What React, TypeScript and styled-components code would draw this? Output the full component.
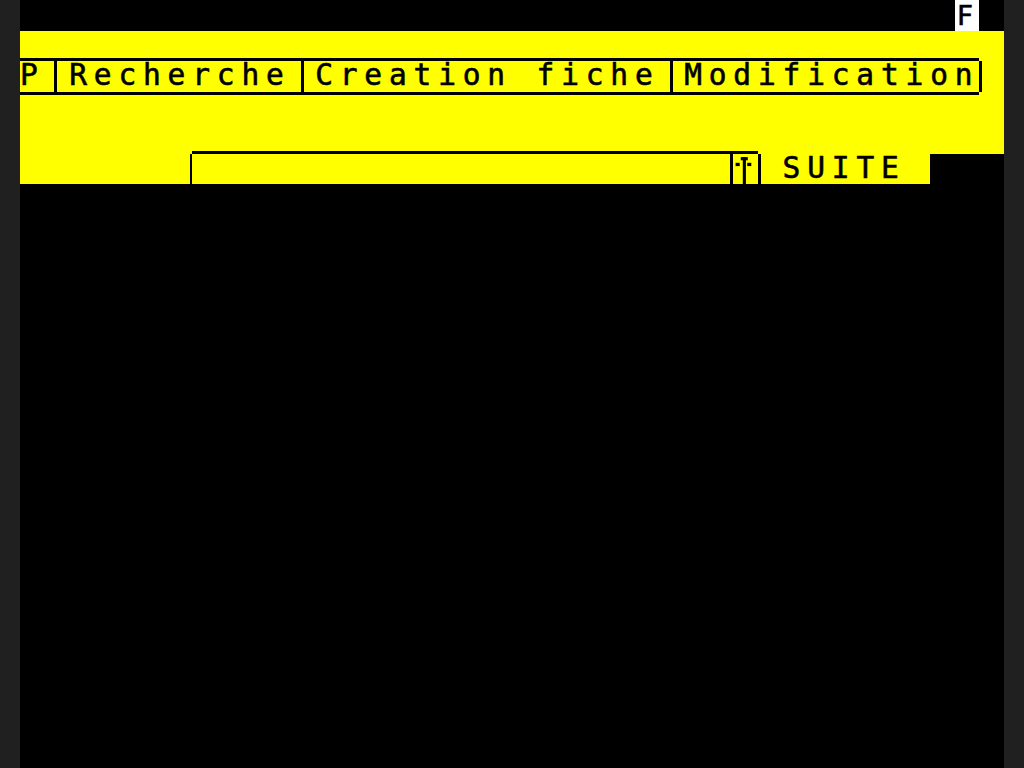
import React from "react";
import styled, { createGlobalStyle } from "styled-components";

const COL = 24.6;
const ROW = 30.72;
const PX = 3.07;
const FONT_SIZE = 29.5;
const SPACING = COL - 0.60205 * FONT_SIZE;

const GlobalStyle = createGlobalStyle`
  html, body {
    margin: 0;
    padding: 0;
    background: #202020;
  }
  body {
    font-family: "DejaVu Sans Mono", "Liberation Mono", monospace;
  }
`;

const Screen = styled.div`
  width: ${COL * 40}px;
  height: 768px;
  margin: 0 auto;
  background: #000;
  overflow: hidden;
  display: flex;
  flex-direction: column;
`;

const StatusRow = styled.div`
  height: ${ROW}px;
  display: flex;
  justify-content: flex-end;
  padding-right: ${COL}px;
  flex: none;
`;

const CellText = styled.span<{ $cols: number; $bg?: string }>`
  display: block;
  flex: none;
  width: ${(p) => p.$cols * COL}px;
  height: ${ROW}px;
  box-sizing: border-box;
  padding-bottom: 2px;
  font-family: "DejaVu Sans Mono", "Liberation Mono", monospace;
  font-size: ${FONT_SIZE}px;
  line-height: ${ROW - 2}px;
  letter-spacing: ${(p) => (p.$cols > 1 ? SPACING : 0)}px;
  white-space: pre;
  color: #000;
  -webkit-text-stroke: 0.6px #000;
  background: ${(p) => p.$bg ?? "transparent"};
`;

const StatusCell = styled(CellText)`
  padding: 0 0 0 2px;
  font-size: 27px;
  line-height: 31.4px;
  overflow: hidden;
`;

const YellowBand = styled.div`
  height: ${ROW * 4}px;
  background: #ffff00;
  flex: none;
  display: flex;
  flex-direction: column;
`;

const MenuRow = styled.div`
  margin-top: ${ROW - PX}px;
  display: flex;
  align-items: center;
`;

const MenuBar = styled.div`
  width: ${COL * 39}px;
  height: ${ROW}px;
  border-top: ${PX}px solid #000;
  border-bottom: ${PX}px solid #000;
  display: flex;
`;

const Divider = styled.span<{ $at: number }>`
  flex: none;
  width: ${COL}px;
  height: ${ROW}px;
  background: linear-gradient(
    to right,
    transparent ${(p) => p.$at}px,
    #000 ${(p) => p.$at}px,
    #000 ${(p) => p.$at + PX}px,
    transparent ${(p) => p.$at + PX}px
  );
`;

const InputRow = styled.div`
  width: ${COL * 37}px;
  height: ${ROW}px;
  background: #ffff00;
  flex: none;
  display: flex;
  align-items: flex-start;
  padding-left: ${COL * 6}px;
  box-sizing: border-box;
`;

const FieldBox = styled.div`
  width: ${COL * 23}px;
  height: ${ROW}px;
  margin-top: -${PX}px;
  border-top: ${PX}px solid #000;
  display: flex;
  flex: none;
`;

const FieldTrack = styled.div`
  width: ${COL * 22}px;
  height: ${ROW}px;
  flex: none;
  background: linear-gradient(
    to right,
    transparent ${COL * 22 - PX}px,
    #000 ${COL * 22 - PX}px
  );
`;

const ArrowCell = styled.span`
  width: ${COL}px;
  height: ${ROW}px;
  flex: none;
  display: block;
  svg {
    display: block;
  }
`;

const SuiteLabel = styled(CellText)`
  padding-left: ${COL}px;
  background: linear-gradient(
    to right,
    #000 ${PX}px,
    transparent ${PX}px
  );
`;

const UpArrow = () => (
  <svg width={COL} height={ROW} viewBox={`0 0 ${COL} ${ROW}`}>
    <rect x={9.8} y={3.1} width={3.1} height={ROW - 3.1} fill="#000" />
    <rect x={7.8} y={3.1} width={7} height={3.2} fill="#000" />
    <rect x={2.6} y={8.8} width={4.1} height={3.3} fill="#000" />
    <rect x={14.2} y={8.8} width={4.1} height={3.3} fill="#000" />
  </svg>
);

export default function App() {
  return (
    <>
      <GlobalStyle />
      <Screen>
        <StatusRow>
          <StatusCell $cols={1} $bg="#ffffff">F</StatusCell>
        </StatusRow>
        <YellowBand>
          <MenuRow>
            <MenuBar>
              <CellText $cols={1}>P</CellText>
              <Divider $at={9.2} />
              <CellText $cols={9}>Recherche</CellText>
              <Divider $at={9.8} />
              <CellText $cols={14}>Creation fiche</CellText>
              <Divider $at={9.6} />
              <CellText $cols={12}>Modification</CellText>
            </MenuBar>
            <Divider $at={0} />
          </MenuRow>
        </YellowBand>
        <InputRow>
          <Divider $at={COL - PX} />
          <FieldBox>
            <FieldTrack />
            <ArrowCell>
              <UpArrow />
            </ArrowCell>
          </FieldBox>
          <SuiteLabel $cols={6}>SUITE</SuiteLabel>
        </InputRow>
      </Screen>
    </>
  );
}
